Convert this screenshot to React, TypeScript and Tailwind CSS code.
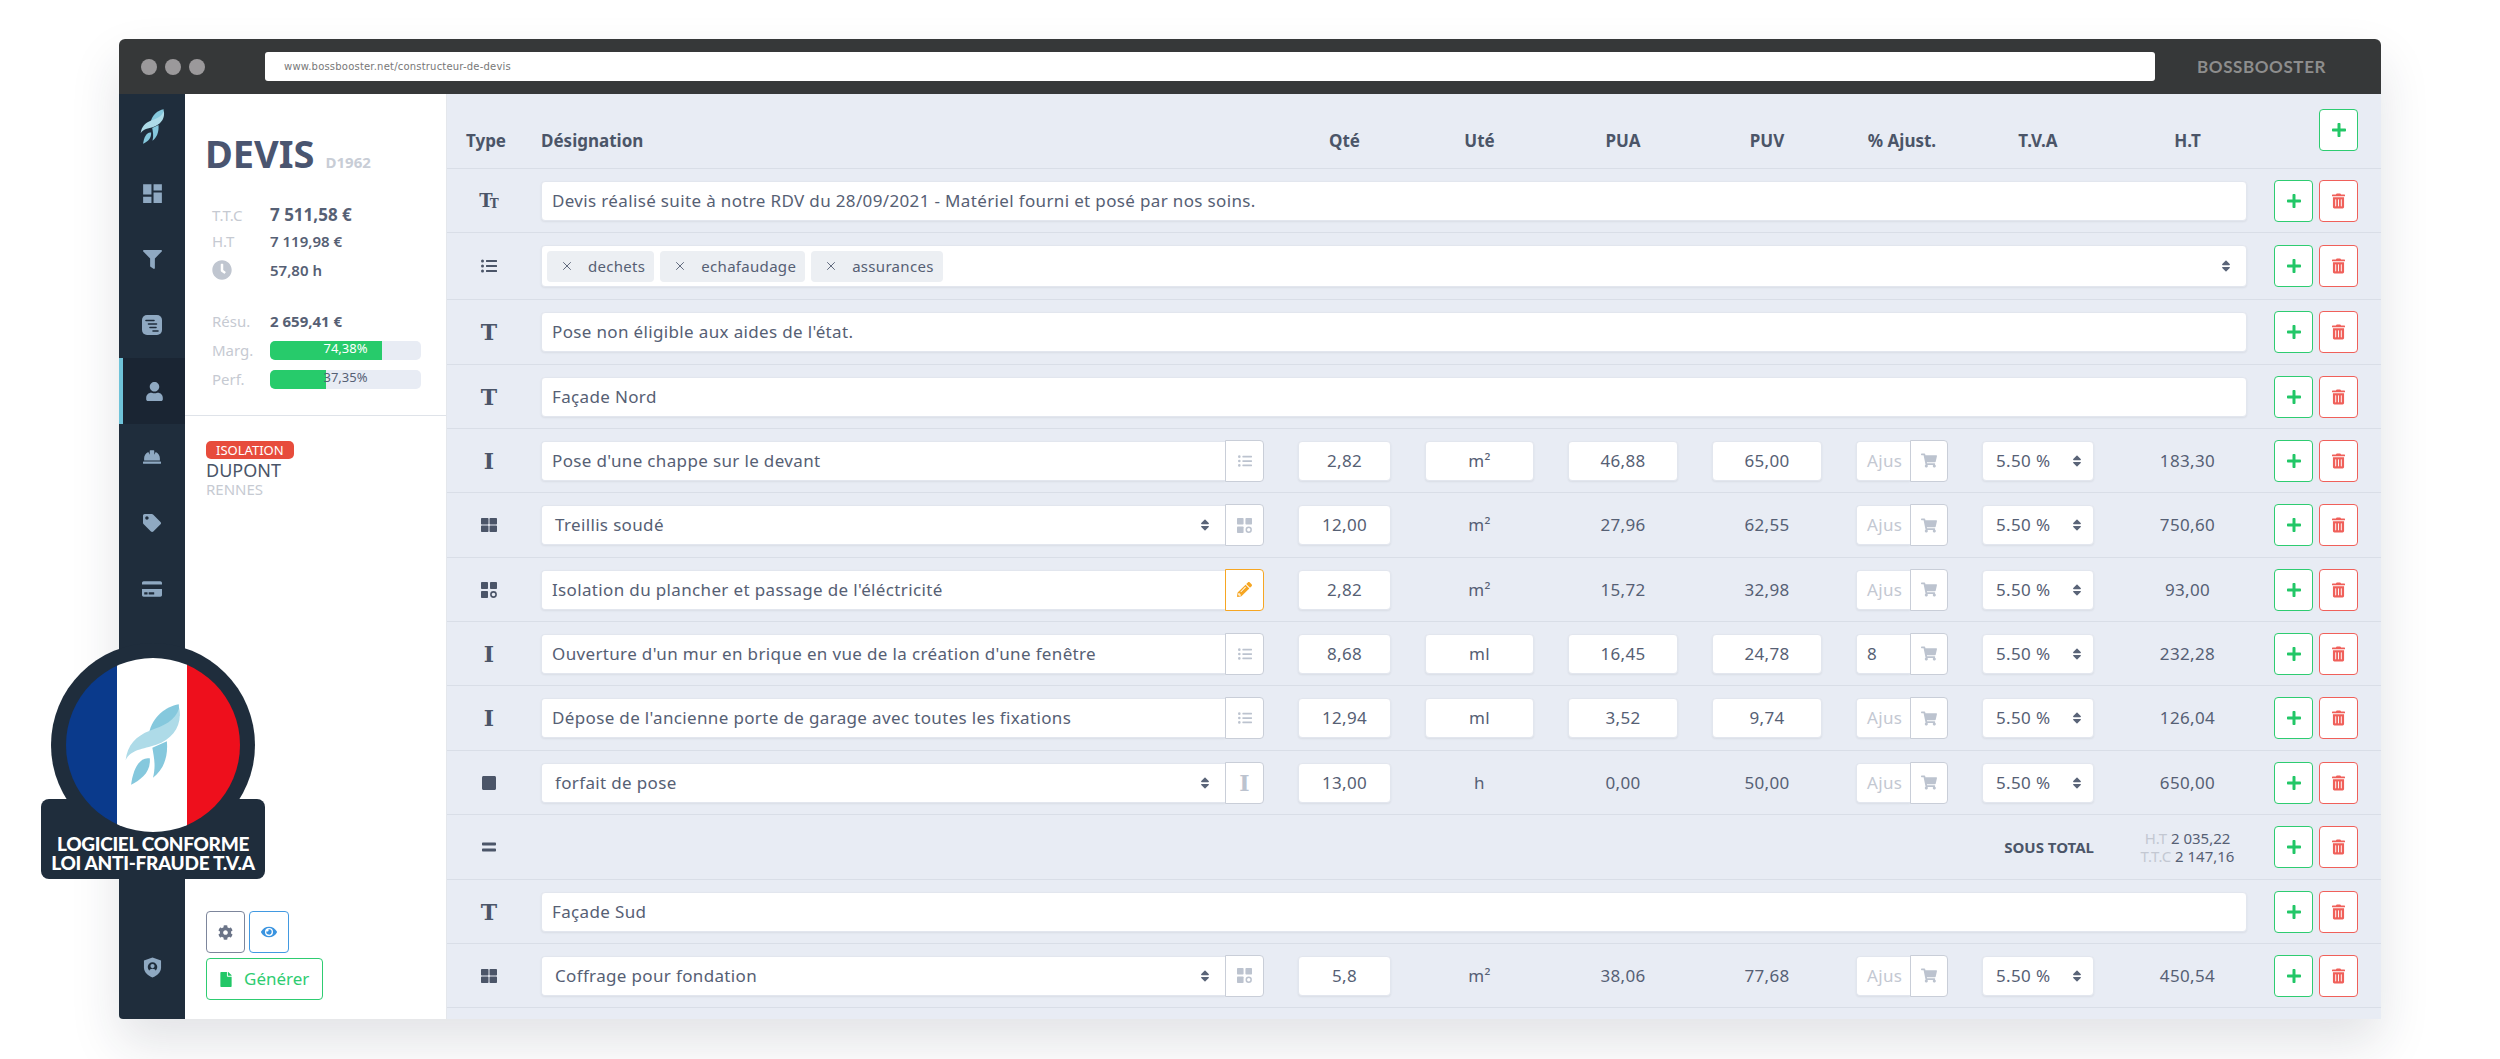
import React from 'react';
import {
  FaClock,
  FaCog,
  FaCreditCard,
  FaEquals,
  FaEye,
  FaFile,
  FaFilter,
  FaHardHat,
  FaListUl,
  FaPencilAlt,
  FaPlus,
  FaShoppingCart,
  FaSort,
  FaStop,
  FaTag,
  FaThLarge,
  FaTrashAlt,
  FaUser,
} from 'react-icons/fa';
import { MdDashboard } from 'react-icons/md';
import { X } from 'lucide-react';

const GRID =
  'grid grid-cols-[36px_723px_93px_109px_110px_110px_92px_112px_119px_84px] gap-x-[34px] items-center pl-[24px]';
const FIELD =
  'h-[40px] bg-white border border-[#e2e6ee] rounded-[4px] shadow-[0_1px_2px_rgba(40,50,70,0.08)] text-[17px] tracking-[0.35px] text-[#566074]';

const Rocket = ({ className }: { className: string }) => (
  <svg viewBox="370 305 180 260" className={className}>
    <path d="M540 310C498 318 458 350 448 398C482 392 530 372 542 345Z" fill="#85c8dd" />
    <path d="M458 445C462 470 470 500 460 538C490 515 508 478 503 425Z" fill="#85c8dd" />
    <path d="M541 322C552 375 522 418 470 436C428 450 392 450 375 484C380 436 408 408 450 392C492 378 530 362 541 322Z" fill="#aedbe8" />
    <path d="M450 478C418 472 398 512 392 560C422 544 454 522 450 478Z" fill="#85c8dd" />
  </svg>
);

const Composite = ({ className }: { className: string }) => (
  <svg viewBox="0 0 16 16" className={className} fill="currentColor">
    <rect x="0" y="0" width="7" height="7" rx="0.8" />
    <rect x="9" y="0" width="7" height="7" rx="0.8" />
    <rect x="0" y="9" width="7" height="7" rx="0.8" />
    <circle cx="12.5" cy="12.5" r="2.6" fill="none" stroke="currentColor" strokeWidth="1.6" />
  </svg>
);

const ScrollIcon = () => (
  <svg viewBox="0 0 20 20" className="w-[20px] h-[20px]">
    <rect x="0" y="0" width="20" height="20" rx="5" fill="#8fa9c2" />
    <path d="M4 5.5h8M6.5 9h8M8 12.5h6M11 16h5" stroke="#1f2d3c" strokeWidth="1.6" strokeLinecap="round" />
  </svg>
);

const ShieldIcon = () => (
  <svg viewBox="0 0 20 22" className="w-[19px] h-[21px]">
    <path d="M10 0.5L19 3.5V11C19 16 15 19.5 10 21.5C5 19.5 1 16 1 11V3.5Z" fill="#8fa9c2" />
    <circle cx="10" cy="10.5" r="5" fill="#1f2d3c" />
    <path d="M6.5 14.5C7 11.5 13 11.5 13.5 14.5L13 16H7Z" fill="#8fa9c2" />
    <circle cx="10" cy="9.5" r="2.2" fill="#8fa9c2" />
  </svg>
);

const Glyph = ({ children, className }: { children: React.ReactNode; className: string }) => (
  <span className={`font-['DejaVu_Serif',serif] font-bold leading-none ${className}`}>{children}</span>
);

const BigT = () => <Glyph className="text-[22px] text-[#4b5568]">T</Glyph>;
const BigI = ({ color = 'text-[#4b5568]' }: { color?: string }) => (
  <Glyph className={`text-[22px] ${color}`}>I</Glyph>
);
const SmallTt = () => (
  <Glyph className="text-[18px] text-[#4b5568] flex items-end">
    T<span className="text-[12px] -ml-[3px]">T</span>
  </Glyph>
);

const typeIcons: Record<string, React.ReactNode> = {
  tt: <SmallTt />,
  list: <FaListUl className="w-[16px] h-[16px] text-[#4b5568]" />,
  t: <BigT />,
  i: <BigI />,
  grid: <FaThLarge className="w-[16px] h-[16px] text-[#4b5568]" />,
  composite: <Composite className="w-[16px] h-[16px] text-[#4b5568]" />,
  stop: <FaStop className="w-[16px] h-[16px] text-[#4b5568]" />,
  equals: <FaEquals className="w-[16px] h-[16px] text-[#4b5568]" />,
};

const Actions = () => (
  <div className="flex gap-[6px] -ml-[7px]">
    <button className="w-[39px] h-[42px] bg-white border border-[#2ecc71] rounded-[4px] flex items-center justify-center">
      <FaPlus className="w-[16px] h-[16px] text-[#22c767]" />
    </button>
    <button className="w-[39px] h-[42px] bg-white border border-[#f0605a] rounded-[4px] flex items-center justify-center">
      <FaTrashAlt className="w-[13px] h-[16px] text-[#f0605a]" />
    </button>
  </div>
);

const Addon = ({ children, warn }: { children: React.ReactNode; warn?: boolean }) => (
  <div
    className={
      warn
        ? 'w-[39px] h-[42px] shrink-0 bg-white border border-[#f6a623] rounded-r-[4px] flex items-center justify-center'
        : 'w-[39px] h-[42px] shrink-0 bg-white border border-[#c9ced8] rounded-r-[4px] flex items-center justify-center'
    }
  >
    {children}
  </div>
);

const addonIcons: Record<string, React.ReactNode> = {
  list: <FaListUl className="w-[14px] h-[14px] text-[#bcc3cf]" />,
  composite: <Composite className="w-[15px] h-[15px] text-[#bcc3cf]" />,
  pen: <FaPencilAlt className="w-[15px] h-[15px] text-[#f6a623]" />,
  i: <BigI color="text-[#bcc3cf]" />,
};

const SortArrows = () => <FaSort className="w-[12px] h-[14px] text-[#5a6478] shrink-0" />;

const Designation = ({ text, select, addon }: { text: string; select?: boolean; addon: string }) => (
  <div className="flex items-center">
    <div className={`${FIELD} flex-1 flex items-center justify-between rounded-r-none border-r-0 ${select ? 'pl-[13px] pr-[14px]' : 'pl-[10px]'}`}>
      <span className="whitespace-nowrap">{text}</span>
      {select && <SortArrows />}
    </div>
    <Addon warn={addon === 'pen'}>{addonIcons[addon]}</Addon>
  </div>
);

const Cell = ({ value, boxed }: { value: string; boxed?: boolean }) =>
  boxed ? (
    <div className={`${FIELD} flex items-center justify-center`}>{value}</div>
  ) : (
    <div className="text-center text-[17px] tracking-[0.35px] text-[#566074]">{value}</div>
  );

const Ajust = ({ value }: { value?: string }) => (
  <div className="flex items-center">
    <div className={`${FIELD} flex-1 min-w-0 overflow-hidden rounded-r-none border-r-0 flex items-center pl-[10px] ${value ? '' : 'text-[#c3c8d2]'}`}>
      {value ?? 'Ajus'}
    </div>
    <div className="w-[38px] h-[42px] shrink-0 bg-white border border-[#c9ced8] rounded-r-[4px] flex items-center justify-center">
      <FaShoppingCart className="w-[16px] h-[15px] text-[#bcc3cf]" />
    </div>
  </div>
);

const Tva = () => (
  <div className={`${FIELD} flex items-center justify-between pl-[13px] pr-[10px]`}>
    <span className="whitespace-nowrap">5.50 %</span>
    <SortArrows />
  </div>
);

const TypeCell = ({ icon }: { icon: string }) => (
  <div className="flex justify-center items-center">{typeIcons[icon]}</div>
);

const Row = ({ h, children }: { h: string; children: React.ReactNode }) => (
  <div className={`${GRID} ${h} border-b border-[#d9dee7]`}>{children}</div>
);

const TextRow = ({ h, icon, text }: { h: string; icon: string; text: string }) => (
  <Row h={h}>
    <TypeCell icon={icon} />
    <div className="col-span-8">
      <div className={`${FIELD} flex items-center pl-[10px]`}>{text}</div>
    </div>
    <Actions />
  </Row>
);

type Line = {
  h: string;
  icon: string;
  text: string;
  select?: boolean;
  addon: string;
  qty: string;
  unit: string;
  pua: string;
  puv: string;
  boxed?: boolean;
  ajust?: string;
  ht: string;
};

const LineRow = ({ line }: { line: Line }) => (
  <Row h={line.h}>
    <TypeCell icon={line.icon} />
    <Designation text={line.text} select={line.select} addon={line.addon} />
    <Cell value={line.qty} boxed />
    <Cell value={line.unit} boxed={line.boxed} />
    <Cell value={line.pua} boxed={line.boxed} />
    <Cell value={line.puv} boxed={line.boxed} />
    <Ajust value={line.ajust} />
    <Tva />
    <Cell value={line.ht} />
    <Actions />
  </Row>
);

const lines: Record<string, Line> = {
  chappe: { h: 'h-[64px]', icon: 'i', text: "Pose d'une chappe sur le devant", addon: 'list', qty: '2,82', unit: 'm²', pua: '46,88', puv: '65,00', boxed: true, ht: '183,30' },
  treillis: { h: 'h-[65px]', icon: 'grid', text: 'Treillis soudé', select: true, addon: 'composite', qty: '12,00', unit: 'm²', pua: '27,96', puv: '62,55', ht: '750,60' },
  isolation: { h: 'h-[64px]', icon: 'composite', text: "Isolation du plancher et passage de l'éléctricité", addon: 'pen', qty: '2,82', unit: 'm²', pua: '15,72', puv: '32,98', ht: '93,00' },
  ouverture: { h: 'h-[64px]', icon: 'i', text: "Ouverture d'un mur en brique en vue de la création d'une fenêtre", addon: 'list', qty: '8,68', unit: 'ml', pua: '16,45', puv: '24,78', boxed: true, ajust: '8', ht: '232,28' },
  depose: { h: 'h-[65px]', icon: 'i', text: "Dépose de l'ancienne porte de garage avec toutes les fixations", addon: 'list', qty: '12,94', unit: 'ml', pua: '3,52', puv: '9,74', boxed: true, ht: '126,04' },
  forfait: { h: 'h-[64px]', icon: 'stop', text: 'forfait de pose', select: true, addon: 'i', qty: '13,00', unit: 'h', pua: '0,00', puv: '50,00', ht: '650,00' },
  coffrage: { h: 'h-[64px]', icon: 'grid', text: 'Coffrage pour fondation', select: true, addon: 'composite', qty: '5,8', unit: 'm²', pua: '38,06', puv: '77,68', ht: '450,54' },
};

const Chip = ({ label }: { label: string }) => (
  <div className="h-[31px] flex items-center gap-[14px] pl-[13px] pr-[9px] bg-[#ecEff3] rounded-[4px] text-[15px] tracking-[0.3px] text-[#566074]">
    <X className="w-[14px] h-[14px] text-[#566074]" strokeWidth={1.6} />
    {label}
  </div>
);

const Header = () => (
  <div className={`${GRID} h-[75px] border-b border-[#d9dee7] text-[17px] font-bold text-[#4b5568]`}>
    <div className="flex justify-center whitespace-nowrap mt-[19px] -ml-[6px]">Type</div>
    <div className="mt-[19px]">Désignation</div>
    <div className="text-center mt-[19px]">Qté</div>
    <div className="text-center mt-[19px]">Uté</div>
    <div className="text-center mt-[19px]">PUA</div>
    <div className="text-center mt-[19px]">PUV</div>
    <div className="text-center mt-[19px]">% Ajust.</div>
    <div className="text-center mt-[19px]">T.V.A</div>
    <div className="text-center mt-[19px]">H.T</div>
    <div className="flex justify-end -ml-[7px] mr-[7px] mb-[2px]">
      <button className="w-[39px] h-[42px] bg-white border border-[#2ecc71] rounded-[4px] flex items-center justify-center">
        <FaPlus className="w-[16px] h-[16px] text-[#22c767]" />
      </button>
    </div>
  </div>
);

const Table = () => (
  <div className="flex-1 bg-[#e8ecf4]">
    <Header />
    <TextRow h="h-[64px]" icon="tt" text="Devis réalisé suite à notre RDV du 28/09/2021 - Matériel fourni et posé par nos soins." />
    <Row h="h-[67px]">
      <TypeCell icon="list" />
      <div className="col-span-8">
        <div className="h-[42px] bg-white border border-[#e2e6ee] rounded-[4px] shadow-[0_1px_2px_rgba(40,50,70,0.08)] flex items-center justify-between pl-[5px] pr-[14px]">
          <div className="flex gap-[6px]">
            <Chip label="dechets" />
            <Chip label="echafaudage" />
            <Chip label="assurances" />
          </div>
          <SortArrows />
        </div>
      </div>
      <Actions />
    </Row>
    <TextRow h="h-[65px]" icon="t" text="Pose non éligible aux aides de l'état." />
    <TextRow h="h-[64px]" icon="t" text="Façade Nord" />
    <LineRow line={lines.chappe} />
    <LineRow line={lines.treillis} />
    <LineRow line={lines.isolation} />
    <LineRow line={lines.ouverture} />
    <LineRow line={lines.depose} />
    <LineRow line={lines.forfait} />
    <Row h="h-[65px]">
      <TypeCell icon="equals" />
      <div className="col-span-7 text-right text-[15px] font-bold text-[#4b5568]">SOUS TOTAL</div>
      <div className="text-center text-[15px] leading-[18px] text-[#566074] whitespace-nowrap">
        <div><span className="text-[#c3c8d2]">H.T</span> 2 035,22</div>
        <div><span className="text-[#c3c8d2]">T.T.C</span> 2 147,16</div>
      </div>
      <Actions />
    </Row>
    <TextRow h="h-[64px]" icon="t" text="Façade Sud" />
    <LineRow line={lines.coffrage} />
  </div>
);

const Progress = ({ value, label, inside }: { value: number; label: string; inside?: boolean }) => (
  <div className="relative w-[151px] h-[19px] bg-[#e8ecf4] rounded-[5px] overflow-hidden">
    <div className="h-full bg-[#27cb6b]" style={{ width: `${value}%` }} />
    <div className={`absolute inset-0 text-center text-[13px] leading-[15px] ${inside ? 'text-white' : 'text-[#566074]'}`}>{label}</div>
  </div>
);

const Summary = () => (
  <div className="w-[262px] shrink-0 bg-white flex flex-col border-r border-[#e4e7ec]">
    <div className="h-[322px] border-b border-[#dfe3e9] pl-[23px]">
      <div className="flex items-baseline gap-[11px] pt-[37px] h-[95px] -ml-[3px]">
        <span className="text-[38px] leading-[44px] font-bold text-[#4a5570]">DEVIS</span>
        <span className="text-[15px] font-bold text-[#c8cdd6]">D1962</span>
      </div>
      <div className="grid grid-cols-[58px_1fr] items-center pl-[4px] text-[#566074]">
        <div className="h-[24px] flex items-center text-[15px] text-[#c6cad2] mt-[14px]">T.T.C</div>
        <div className="h-[24px] flex items-center text-[17px] font-bold mt-[14px]">7 511,58 €</div>
        <div className="h-[28px] flex items-center text-[15px] text-[#c6cad2]">H.T</div>
        <div className="h-[28px] flex items-center text-[15px] font-semibold">7 119,98 €</div>
        <div className="h-[30px] flex items-center"><FaClock className="w-[20px] h-[20px] text-[#c0c6d0]" /></div>
        <div className="h-[30px] flex items-center text-[15px] font-semibold">57,80 h</div>
        <div className="h-[29px] mt-[22px] flex items-center text-[15px] text-[#c6cad2]">Résu.</div>
        <div className="h-[29px] mt-[22px] flex items-center text-[15px] font-bold">2 659,41 €</div>
        <div className="h-[29px] flex items-center text-[15px] text-[#c6cad2]">Marg.</div>
        <Progress value={74.38} label="74,38%" inside />
        <div className="h-[29px] flex items-center text-[15px] text-[#c6cad2]">Perf.</div>
        <Progress value={37.35} label="37,35%" />
      </div>
    </div>
    <div className="flex-1 flex flex-col justify-between pl-[21px] pt-[25px] pb-[19px]">
      <div>
        <span className="block w-fit h-[18px] px-[10px] rounded-[5px] bg-[#e74c3c] text-white text-[13px] leading-[18px]">ISOLATION</span>
        <div className="text-[18px] leading-[20px] text-[#4a5568] mt-[1px]">DUPONT</div>
        <div className="text-[15px] leading-[18px] text-[#c6cad2]">RENNES</div>
      </div>
      <div className="flex flex-col gap-[5px]">
        <div className="flex gap-[4px]">
          <button className="w-[39px] h-[42px] border border-[#7d869c] rounded-[4px] flex items-center justify-center">
            <FaCog className="w-[15px] h-[15px] text-[#6b7488]" />
          </button>
          <button className="w-[40px] h-[42px] border border-[#4299e1] rounded-[4px] flex items-center justify-center">
            <FaEye className="w-[16px] h-[16px] text-[#3a94e0]" />
          </button>
        </div>
        <button className="w-[117px] h-[42px] border border-[#2ecc71] rounded-[4px] flex items-center gap-[12px] pl-[13px] text-[17px] text-[#2ecc71]">
          <FaFile className="w-[12px] h-[15px] text-[#22c767]" />
          Générer
        </button>
      </div>
    </div>
  </div>
);

const NavItem = ({ children, active }: { children: React.ReactNode; active?: boolean }) => (
  <div
    className={
      active
        ? 'h-[66px] flex items-center justify-center bg-[#1a2533] border-l-[4px] border-[#6fc3d9] text-[#8fa9c2]'
        : 'h-[66px] flex items-center justify-center text-[#8fa9c2]'
    }
  >
    {children}
  </div>
);

const Sidebar = () => (
  <div className="w-[66px] shrink-0 bg-[#1f2d3c] flex flex-col rounded-bl-[4px]">
    <div className="h-[66px] flex items-start justify-center pt-[14px]">
      <Rocket className="w-[25px] h-[37px]" />
    </div>
    <NavItem><MdDashboard className="w-[25px] h-[25px]" /></NavItem>
    <NavItem><FaFilter className="w-[19px] h-[19px]" /></NavItem>
    <NavItem><ScrollIcon /></NavItem>
    <NavItem active><FaUser className="w-[17px] h-[19px]" /></NavItem>
    <NavItem><FaHardHat className="w-[20px] h-[18px]" /></NavItem>
    <NavItem><FaTag className="w-[18px] h-[18px]" /></NavItem>
    <NavItem><FaCreditCard className="w-[20px] h-[18px]" /></NavItem>
    <div className="mt-auto h-[62px] flex items-start justify-center">
      <ShieldIcon />
    </div>
  </div>
);

const TitleBar = () => (
  <div className="h-[55px] bg-[#363839] rounded-t-[6px] flex items-center pl-[22px]">
    <div className="flex gap-[8px] w-[124px] shrink-0">
      <span className="w-[16px] h-[16px] rounded-full bg-[#9b999b]" />
      <span className="w-[16px] h-[16px] rounded-full bg-[#9b999b]" />
      <span className="w-[16px] h-[16px] rounded-full bg-[#9b999b]" />
    </div>
    <div className="w-[1890px] shrink-0 h-[29px] bg-white rounded-[3px] flex items-center pl-[19px] text-[10px] tracking-[0.2px] text-[#777777] font-['DejaVu_Sans',sans-serif]">
      www.bossbooster.net/constructeur-de-devis
    </div>
    <div className="ml-[42px] font-['Lato',sans-serif] font-bold text-[17px] tracking-[0.6px] text-[#8d8d8d]">BOSSBOOSTER</div>
  </div>
);

// seal lying over the sidebar and the page edge
const Seal = () => (
  <div className="absolute left-[41px] top-[643px] w-[224px] h-[236px]">
    <div className="absolute left-[10px] top-0 w-[204px] h-[204px] rounded-full bg-[#1f2d3c]" />
    <div className="absolute left-0 bottom-0 w-[224px] h-[80px] bg-[#1f2d3c] rounded-[8px]" />
    <div className="absolute left-[25px] top-[15px] w-[174px] h-[174px] rounded-full overflow-hidden flex">
      <div className="w-[51px] bg-[#0a3a8c]" />
      <div className="w-[70px] bg-white" />
      <div className="flex-1 bg-[#ee0f1c]" />
      <Rocket className="absolute left-[58px] top-[44px] w-[58px] h-[85px]" />
    </div>
    <div className="absolute inset-x-0 bottom-[7px] text-center font-['Lato',sans-serif] font-black text-white text-[19px] leading-[19px] tracking-[-0.3px] whitespace-nowrap">
      LOGICIEL CONFORME
      <br />
      LOI ANTI-FRAUDE T.V.A
    </div>
  </div>
);

const App: React.FC = () => {
  return (
    <div className="relative w-[2500px] h-[1059px] overflow-hidden bg-white pl-[119px] pt-[39px] font-['Noto_Sans',sans-serif]">
      <div className="w-[2262px] h-[980px] flex flex-col rounded-[6px] shadow-[0_24px_50px_rgba(30,40,60,0.13)]">
        <TitleBar />
        <div className="flex flex-1 min-h-0">
          <Sidebar />
          <Summary />
          <Table />
        </div>
      </div>
      <Seal />
    </div>
  );
};

export default App;
